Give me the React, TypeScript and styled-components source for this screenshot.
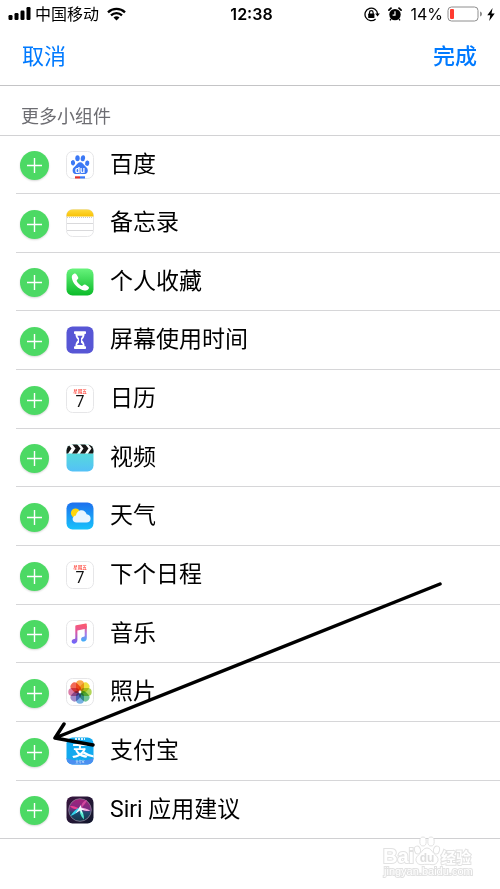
import React from "react";
import styled, { createGlobalStyle } from "styled-components";

const cjk = `Inter, "Noto Sans CJK SC", sans-serif`;

const GlobalStyle = createGlobalStyle`
  *, *::before, *::after { box-sizing: border-box; }
  body { margin: 0; background: #fff; color: #000; font-family: ${cjk}; }
`;

const Page = styled.main`
  position: relative;
  min-height: 100vh;
  overflow: hidden;
  background: #fff;
`;

const StatusBar = styled.div`
  display: grid;
  grid-template-columns: 1fr auto 1fr;
  align-items: center;
  height: 28px;
  padding: 0 5px 0 8px;
  font-size: 16px;
  line-height: 24px;
`;

const StatusSide = styled.div<{ $end?: boolean }>`
  display: flex;
  align-items: center;
  justify-content: ${(p) => (p.$end ? "flex-end" : "flex-start")};
  gap: 4px;
`;

const Carrier = styled.span`
  margin-right: 4px;
`;

const Clock = styled.time`
  font-weight: 600;
`;

const StatusIcons = styled.span`
  display: flex;
  gap: 8px;
  margin-right: 4px;
`;

const NavBar = styled.header`
  display: flex;
  align-items: center;
  justify-content: space-between;
  height: 58px;
  padding: 0 23px 2px 22px;
  border-bottom: 1px solid #c4c4c6;
`;

const NavButton = styled.button<{ $strong?: boolean }>`
  border: 0;
  padding: 0;
  background: none;
  color: #007aff;
  font-family: ${cjk};
  font-size: 22px;
  line-height: 32px;
  font-weight: ${(p) => (p.$strong ? 500 : 400)};
  cursor: pointer;
`;

const SectionTitle = styled.h1`
  margin: 0;
  height: 50px;
  padding: 19px 21px 0;
  border-bottom: 1px solid #d2d2d4;
  color: #6d6d72;
  font-size: 18px;
  line-height: 24px;
  font-weight: 400;
`;

const List = styled.ul`
  margin: 0;
  padding: 0;
  list-style: none;
  border-bottom: 1px solid #d0d0d2;
`;

const Row = styled.li`
  display: flex;
  align-items: center;
  height: 59px;
  margin-left: 16px;
  padding-left: 4px;
  border-bottom: 1px solid #d6d6d8;

  &:first-child,
  &:nth-child(3n) {
    height: 58px;
  }
  &:last-child {
    height: 57px;
    border-bottom: 0;
  }
`;

const AddButton = styled.button`
  display: grid;
  place-items: center;
  width: 29px;
  height: 29px;
  margin-top: 2px;
  padding: 0;
  border: 0;
  border-radius: 50%;
  background: #4cd964;
  box-shadow: 0 1px 2px rgba(0, 0, 0, 0.16);
  cursor: pointer;
`;

const AppIcon = styled.svg`
  width: 28px;
  height: 28px;
  margin: 0 16px 0 17px;
  flex: none;
`;

const Label = styled.span`
  font-family: Roboto, "Noto Sans CJK SC", sans-serif;
  font-size: 23px;
  line-height: 32px;
  white-space: nowrap;
`;

const Arrow = styled.svg`
  position: absolute;
  left: 50px;
  top: 578px;
  pointer-events: none;
`;

const Watermark = styled.svg`
  position: absolute;
  right: 24px;
  bottom: 8px;
  pointer-events: none;
`;

const frame = <rect x=".5" y=".5" width="27" height="27" rx="6" fill="#fff" stroke="#e6e6e8" />;

const Baidu = () => (
  <>
    {frame}
    <g fill="#3b78f5">
      <ellipse cx="7" cy="11.800" rx="2.100" ry="2.700" transform="rotate(-12 7 11.800)" />
      <ellipse cx="11.500" cy="7.200" rx="2.200" ry="3" />
      <ellipse cx="16.900" cy="7.200" rx="2.200" ry="3" transform="rotate(8 16.900 7.200)" />
      <ellipse cx="21.200" cy="12.200" rx="2.100" ry="2.700" transform="rotate(12 21.200 12.200)" />
      <path d="M14.200 11.200c2.300 0 3 1.900 4.600 3.600 1.300 1.300 3 2.300 3 4.600 0 2.500-1.600 3.700-3.800 3.700-1.400 0-2.500-.4-3.800-.4s-2.400.4-3.800.4c-2.200 0-3.800-1.200-3.800-3.700 0-2.300 1.700-3.300 3-4.600 1.600-1.700 2.300-3.600 4.600-3.600z" />
    </g>
    <text x="14" y="21.500" textAnchor="middle" fill="#fff" fontSize="8" fontWeight="700" fontFamily="Inter, sans-serif">du</text>
    <path d="M9 25.300h5v2.200H9z" fill="#e0322f" />
    <path d="M14 25.300h5v2.200h-5z" fill="#3b78f5" />
  </>
);

const Notes = () => (
  <>
    <defs>
      <linearGradient id="notes" x2="0" y2="1">
        <stop stopColor="#ffda3d" />
        <stop offset="1" stopColor="#f8c105" />
      </linearGradient>
    </defs>
    {frame}
    <path d="M.5 7.500V6.500a6 6 0 0 1 6-6h15a6 6 0 0 1 6 6v1z" fill="url(#notes)" />
    <path d="M1 8.500h26" stroke="#c9c9c9" strokeDasharray="1 1" />
    <path d="M1 14.500h26M1 21.500h26" stroke="#d9d9db" />
  </>
);

const Phone = () => (
  <>
    <defs>
      <linearGradient id="phone" x2="0" y2="1">
        <stop stopColor="#67f37c" />
        <stop offset="1" stopColor="#0bbb29" />
      </linearGradient>
    </defs>
    <rect x=".5" y=".5" width="27" height="27" rx="6" fill="url(#phone)" />
    <path
      fill="#fff"
      d="M8.300 5.600c1-.5 1.700.1 2.400 1.200l1.300 2.200c.6 1.100.2 1.900-.7 2.600-.6.500-.8 1-.3 1.900 1 1.700 2.400 3.200 4.200 4.200.8.400 1.300.2 1.900-.4.700-.8 1.500-1.200 2.500-.5l2.200 1.500c1 .7 1.500 1.400 1 2.300-.8 1.500-2.300 2.300-4.200 1.900C12.200 21.100 6.500 15.500 5.800 9.400c-.1-1.700 1-3.100 2.500-3.800z"
    />
  </>
);

const ScreenTime = () => (
  <>
    <rect x=".5" y=".5" width="27" height="27" rx="6" fill="#5756d5" />
    <path
      d="M8.800 5.200h10.400a.8.8 0 0 1 .8.800v1.200a.8.8 0 0 1-.8.800h-.6c-.1 3-1.200 4.600-2.800 6 1.600 1.400 2.700 3 2.800 6.200h.6a.8.8 0 0 1 .8.800v1.200a.8.8 0 0 1-.8.800H8.800a.8.8 0 0 1-.8-.8V21a.8.8 0 0 1 .8-.8h.6c.1-3.200 1.200-4.800 2.800-6.200-1.600-1.400-2.700-3-2.800-6h-.6a.8.8 0 0 1-.8-.8V6a.8.8 0 0 1 .8-.8z"
      fill="#fff"
    />
    <path d="M11.400 9.800h5.200c-.3 1-.8 1.800-1.600 2.500v4.400c1 .5 1.600 1.300 1.900 2.400h-5.800c.3-1.100.9-1.900 1.900-2.400v-4.400c-.8-.7-1.300-1.500-1.600-2.500z" fill="#5756d5" />
  </>
);

const Calendar = () => (
  <>
    {frame}
    <text x="14" y="7.500" textAnchor="middle" fill="#ff3b30" fontSize="4.500" fontWeight="500" fontFamily='"Noto Sans CJK SC", sans-serif'>星期五</text>
    <text x="14" y="21.500" textAnchor="middle" fill="#111" fontSize="16" fontFamily="Roboto, sans-serif">7</text>
  </>
);

const Videos = () => (
  <>
    <defs>
      <linearGradient id="video" x2="0" y2="1">
        <stop stopColor="#57e6cd" />
        <stop offset="1" stopColor="#54c0f8" />
      </linearGradient>
      <clipPath id="videoClip">
        <rect x=".5" y=".5" width="27" height="27" rx="6" />
      </clipPath>
    </defs>
    <g clipPath="url(#videoClip)">
      <path d="M0 0h28v28H0z" fill="url(#video)" />
      <path d="M0 0h28v9.500H0z" fill="#fff" />
      <path
        fill="#161616"
        d="M-3 0h5l3.500 4.500h-5zM6 0h5l3.500 4.500h-5zM14 0h5l3.500 4.500h-5zM22 0h5l3.500 4.500h-5zM.5 4.500h5L2 9.500h-5zM9.500 4.500h5L11 9.500H6zM17.500 4.500h5L19 9.500h-5zM25.500 4.500h5L27 9.500h-5z"
      />
    </g>
  </>
);

const Weather = () => (
  <>
    <defs>
      <linearGradient id="sky" x2="0" y2="1">
        <stop stopColor="#1d70ee" />
        <stop offset="1" stopColor="#17c2fb" />
      </linearGradient>
    </defs>
    <rect x=".5" y=".5" width="27" height="27" rx="6" fill="url(#sky)" />
    <circle cx="9.500" cy="11" r="4.600" fill="#ffd60a" />
    <path d="M10.500 20.600c-2.300 0-3.900-1.500-3.900-3.600 0-2 1.500-3.400 3.400-3.600.5-3 2.700-5.200 5.500-5.200 2.600 0 4.600 1.700 5.100 4.100 2.300.2 4 1.900 4 4.200 0 2.400-1.700 4.100-4.200 4.100z" fill="#e9f5fe" />
  </>
);

const Music = () => (
  <>
    <defs>
      <linearGradient id="music" gradientUnits="userSpaceOnUse" x1="16" y1="4" x2="11" y2="24">
        <stop stopColor="#fb5a6e" />
        <stop offset=".4" stopColor="#e4589c" />
        <stop offset="1" stopColor="#6a66ff" />
      </linearGradient>
      <linearGradient id="note" gradientUnits="userSpaceOnUse" x1="20" y1="5" x2="18" y2="22">
        <stop stopColor="#fb5a6e" />
        <stop offset=".5" stopColor="#a878e8" />
        <stop offset="1" stopColor="#35b3fb" />
      </linearGradient>
    </defs>
    {frame}
    <path d="M18.700 6h2.100v11.900c0 2.200-1.200 3.500-3.100 3.700-1.500.1-2.600-.8-2.600-2.200 0-1.500 1-2.400 2.600-2.600.7-.1 1-.4 1-1z" fill="url(#note)" />
    <path d="M9.300 6.200c0-.6.300-.9.900-1l9.700-1.600c.6-.1.900.2.900.8v4L11.400 10.400v9.700c0 2.200-1.200 3.500-3.100 3.700-1.500.1-2.600-.8-2.600-2.200 0-1.500 1-2.400 2.600-2.600.7-.1 1-.4 1-1z" fill="url(#music)" />
  </>
);

const petals = ["#f9a13a", "#ecdd2a", "#a8d045", "#62c08a", "#67a9e0", "#977fc4", "#d76f9f", "#f05a45"];

const Photos = () => (
  <>
    {frame}
    {petals.map((color, i) => (
      <rect
        key={color}
        x="10"
        y="2.300"
        width="8"
        height="11.200"
        rx="4"
        fill={color}
        fillOpacity=".9"
        style={{ mixBlendMode: "multiply" }}
        transform={`rotate(${i * 45} 14 14)`}
      />
    ))}
    <circle cx="14" cy="14" r="1.400" fill="#fff" />
  </>
);

const Alipay = () => (
  <>
    <defs>
      <clipPath id="payClip">
        <rect x=".5" y=".5" width="27" height="27" rx="6" />
      </clipPath>
    </defs>
    <g clipPath="url(#payClip)">
      <path d="M0 0h28v28H0z" fill="#12a9ee" />
      <path d="M0 21c5 2 9 2.500 14 2.500s9-.5 14-2.500v7H0z" fill="#4b8ff0" />
      <path d="M9 2h10" stroke="#d8f2ff" strokeWidth="2" strokeDasharray="2 1" />
      <text x="14" y="19" textAnchor="middle" fill="#fff" fontSize="16" fontWeight="700" fontFamily='"Noto Sans CJK SC", sans-serif'>支</text>
      <path d="M17.500 15.500c3 2 6.500 3.300 10.500 4" fill="none" stroke="#fff" strokeWidth="2.200" />
      <text x="14" y="25.500" textAnchor="middle" fill="#d8edff" fontSize="3" fontFamily='"Noto Sans CJK SC", sans-serif'>支付宝</text>
    </g>
  </>
);

const Siri = () => (
  <>
    <defs>
      <linearGradient id="siri" x2="1" y2="1">
        <stop stopColor="#39163f" />
        <stop offset="1" stopColor="#10172b" />
      </linearGradient>
      <linearGradient id="siriOrb" x2="0" y2="1">
        <stop stopColor="#a8207c" />
        <stop offset=".45" stopColor="#7a2c80" />
        <stop offset=".62" stopColor="#1e4a6f" />
        <stop offset="1" stopColor="#133447" />
      </linearGradient>
    </defs>
    <rect x=".5" y=".5" width="27" height="27" rx="6" fill="url(#siri)" />
    <circle cx="14" cy="14" r="11.300" fill="url(#siriOrb)" stroke="#8a8298" strokeWidth=".8" />
    <path d="M4 10c3 0 6 .5 10 3-4 .8-8 0-10-3z" fill="#e93f91" />
    <path d="M15 12c3-3 5-5 6-8-4 1-6 4-6 8z" fill="#d3479f" />
    <path d="M4.500 20c2-3.500 5-7 10-9-1.500 4-5 7.500-10 9z" fill="#35d5ee" />
    <path d="M13 11.500c5 0 8.500 1.500 11.500 3.500-4 .5-8-.5-11.500-3.500z" fill="#f7a7de" />
    <path d="M13.500 11c3.500 4 4.500 8 4.500 12.500-3.500-3.500-5-8-4.500-12.500z" fill="#52ecd0" />
    <path d="m14.500 9 1 3 4 2.300-4-.4 1.200 4.600-2.700-4-4.500 3 3.500-5.200z" fill="#f3f7ff" />
  </>
);

const widgets: { name: string; Icon: React.FC }[] = [
  { name: "百度", Icon: Baidu },
  { name: "备忘录", Icon: Notes },
  { name: "个人收藏", Icon: Phone },
  { name: "屏幕使用时间", Icon: ScreenTime },
  { name: "日历", Icon: Calendar },
  { name: "视频", Icon: Videos },
  { name: "天气", Icon: Weather },
  { name: "下个日程", Icon: Calendar },
  { name: "音乐", Icon: Music },
  { name: "照片", Icon: Photos },
  { name: "支付宝", Icon: Alipay },
  { name: "Siri 应用建议", Icon: Siri },
];

export default function App() {
  return (
    <Page>
      <GlobalStyle />
      <StatusBar>
        <StatusSide>
          <svg width="23" height="14" viewBox="0 0 23 14" aria-hidden="true">
            <rect x=".5" y="8" width="4" height="5" rx="1.200" />
            <rect x="6.500" y="6" width="4" height="7" rx="1.200" />
            <rect x="12.500" y="3.500" width="4" height="9.500" rx="1.200" />
            <rect x="18.500" y="0" width="4" height="13" rx="1.200" />
          </svg>
          <Carrier>中国移动</Carrier>
          <svg width="19" height="14" viewBox="0 0 19 14" fill="none" stroke="#000" strokeWidth="2.300" aria-hidden="true">
            <path d="M1 5.300a12.300 12.300 0 0 1 17 0M4 8.400a8 8 0 0 1 11 0" />
            <path d="M9.500 13.500 6.500 10.600a4.400 4.400 0 0 1 6 0z" fill="#000" stroke="none" />
          </svg>
        </StatusSide>
        <Clock>12:38</Clock>
        <StatusSide $end>
          <StatusIcons>
            <svg width="16" height="15" viewBox="0 0 16 15" fill="none" stroke="#000" aria-hidden="true">
              <path d="M13.600 7A6.300 6.300 0 1 0 11.600 12" strokeWidth="1.300" />
              <path d="M11.200 6.600h4.600l-2.300 3z" fill="#000" stroke="none" />
              <rect x="4.200" y="6.600" width="6.200" height="4.400" rx=".6" fill="#000" stroke="none" />
              <path d="M5.500 7V5.400a1.800 1.800 0 0 1 3.600 0V7" strokeWidth="1.200" />
            </svg>
            <svg width="14" height="14" viewBox="0 0 14 14" aria-hidden="true">
              <circle cx="7" cy="7.600" r="5.700" />
              <path d="M.9 3.200 3 1.200M13.100 3.200l-2.100-2" stroke="#000" strokeWidth="1.700" strokeLinecap="round" />
              <path d="M7 4.300v3.800H4.600" fill="none" stroke="#fff" strokeWidth="1.200" />
              <path d="m3 12-1 1.300M11 12l1 1.300" stroke="#000" strokeWidth="1.300" />
            </svg>
          </StatusIcons>
          <span>14%</span>
          <svg width="36" height="16" viewBox="0 0 36 16" aria-hidden="true">
            <rect x="1" y="1" width="30" height="14" rx="3.500" fill="#fff" stroke="#8e8e8e" />
            <rect x="3" y="3" width="4" height="10" rx="1" fill="#ff3b30" />
            <path d="M33 5.500c1.500.5 2 1.500 2 2.500s-.5 2-2 2.500z" fill="#8e8e8e" />
          </svg>
          <svg width="8" height="13" viewBox="0 0 8 13" aria-hidden="true">
            <path d="M5.600 0 .3 7.300h3L2.200 13 7.700 5.500H4.500z" />
          </svg>
        </StatusSide>
      </StatusBar>
      <NavBar>
        <NavButton type="button">取消</NavButton>
        <NavButton type="button" $strong>完成</NavButton>
      </NavBar>
      <SectionTitle>更多小组件</SectionTitle>
      <List>
        {widgets.map(({ name, Icon }) => (
          <Row key={name}>
            <AddButton type="button" aria-label={`添加${name}`}>
              <svg width="15" height="15" viewBox="0 0 15 15" stroke="#fff" strokeWidth="1.400" aria-hidden="true">
                <path d="M7.500 0v15M0 7.500h15" />
              </svg>
            </AddButton>
            <AppIcon viewBox="0 0 28 28" aria-hidden="true">
              <Icon />
            </AppIcon>
            <Label>{name}</Label>
          </Row>
        ))}
      </List>
      <Arrow width="396" height="174" viewBox="0 0 396 174" fill="none" stroke="#000" strokeWidth="3.500" strokeLinecap="round" strokeLinejoin="round" aria-hidden="true">
        <path d="M390 6 5 160M14 146 5 160l38 7" />
      </Arrow>
      <Watermark width="94" height="48" viewBox="0 0 94 48" fill="#fff" stroke="#e2e2e2" strokeWidth="1">
        <text x="1" y="30" fontSize="20" fontWeight="700" paintOrder="stroke" strokeWidth="2" fontFamily='"Liberation Sans", sans-serif'>Bai</text>
        <ellipse cx="35.500" cy="17" rx="3" ry="4" transform="rotate(-15 35.500 17)" />
        <ellipse cx="41" cy="8.500" rx="3.200" ry="4.500" />
        <ellipse cx="49" cy="8.500" rx="3.200" ry="4.500" />
        <ellipse cx="54.500" cy="17" rx="3" ry="4" transform="rotate(15 54.500 17)" />
        <path d="M45 15c3.500 0 4.500 3 7 5.500s4.500 4 4 7-3.500 4.500-6 4.200c-3.500-.5-6.500-.5-10 0-2.500.3-5.500-1.200-6-4.200s1.500-4.500 4-7S41.500 15 45 15z" />
        <text x="45" y="29" textAnchor="middle" fontSize="12" fontWeight="700" fill="#dedede" stroke="none" fontFamily='"Liberation Sans", sans-serif'>du</text>
        <text x="59" y="30" fontSize="15" fontWeight="700" paintOrder="stroke" strokeWidth="2" fontFamily='"Noto Sans CJK SC", sans-serif'>经验</text>
        <text x="2" y="42" fontSize="11" paintOrder="stroke" strokeWidth="2" fontFamily='"Liberation Sans", sans-serif'>jingyan.baidu.com</text>
      </Watermark>
    </Page>
  );
}
